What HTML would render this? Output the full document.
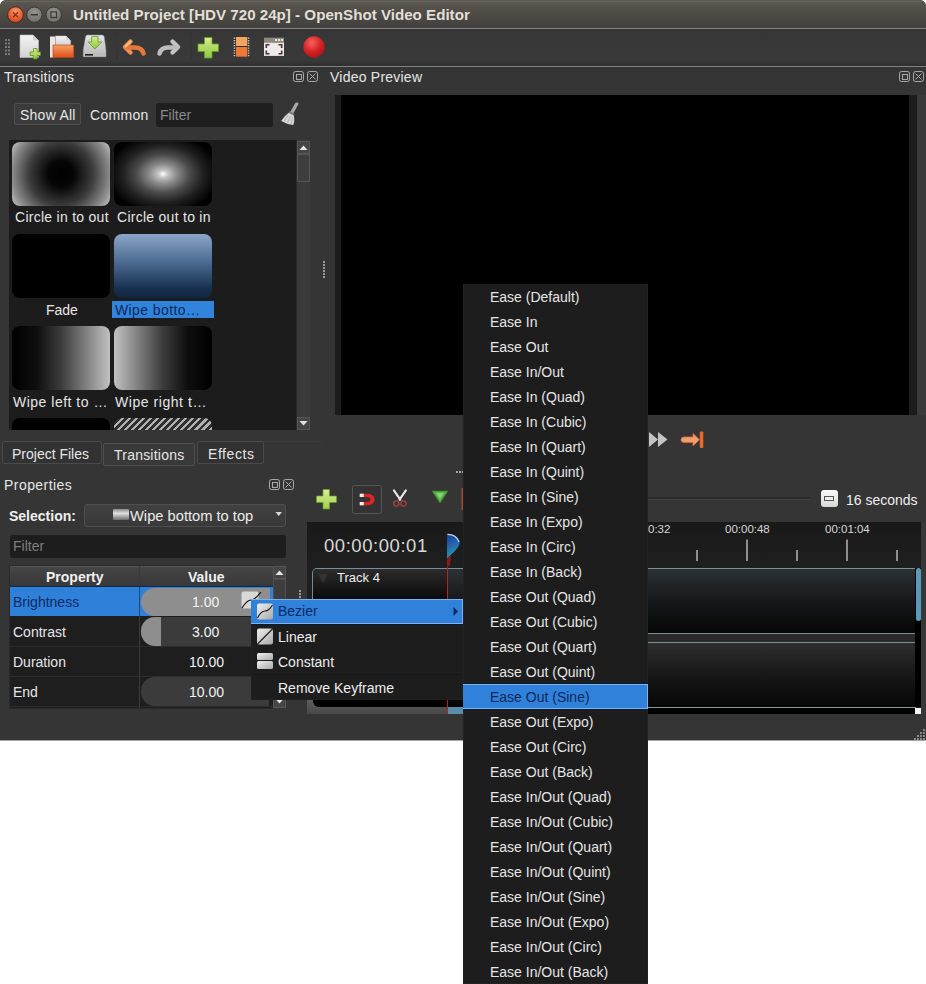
<!DOCTYPE html>
<html><head><meta charset="utf-8">
<style>
*{margin:0;padding:0;box-sizing:border-box}
html,body{width:926px;height:984px;overflow:hidden;background:#ffffff;font-family:"Liberation Sans",sans-serif;}
.a{position:absolute}
.t{position:absolute;white-space:nowrap;font-size:14px;line-height:14px;color:#e6e6e6}
#win{position:absolute;left:0;top:0;width:926px;height:740px;background:#353535;overflow:hidden;border-radius:6px 6px 0 0}
</style></head><body>
<div id="win">
  <!-- title bar -->
  <div class="a" style="left:0;top:0;width:926px;height:28px;background:linear-gradient(#5b5950,#4d4b45 50%,#42403d);border-radius:6px 6px 0 0"></div>
  <div class="a" style="left:4px;top:1px;width:918px;height:1px;background:#66645c"></div>
  <div class="a" style="left:0;top:28px;width:926px;height:1px;background:#858480"></div>
  <div class="t" style="left:73px;top:7px;font-size:15.15px;line-height:15px;font-weight:bold;color:#e2dfd8">Untitled Project [HDV 720 24p] - OpenShot Video Editor</div>
  <!-- window buttons -->
  <svg class="a" style="left:0;top:0" width="70" height="28">
    <defs>
      <radialGradient id="gclose" cx="50%" cy="30%" r="65%"><stop offset="0" stop-color="#f79a70"/><stop offset="0.6" stop-color="#e8643a"/><stop offset="1" stop-color="#d44e26"/></radialGradient>
      <radialGradient id="ggray" cx="50%" cy="30%" r="65%"><stop offset="0" stop-color="#94938e"/><stop offset="1" stop-color="#72716c"/></radialGradient>
    </defs>
    <circle cx="15.5" cy="14.7" r="7.9" fill="url(#gclose)" stroke="#4a2418" stroke-width="0.9"/>
    <path d="M13 12.2 L18 17.2 M18 12.2 L13 17.2" stroke="#8a2c12" stroke-width="1.3"/>
    <circle cx="34.4" cy="14.7" r="7.7" fill="url(#ggray)" stroke="#33322e" stroke-width="0.9"/>
    <rect x="30.8" y="14" width="7.2" height="1.5" fill="#3a3935"/>
    <circle cx="53.7" cy="14.7" r="7.7" fill="url(#ggray)" stroke="#33322e" stroke-width="0.9"/>
    <rect x="50.9" y="11.9" width="5.6" height="5.6" fill="none" stroke="#3a3935" stroke-width="1.2"/>
  </svg>
  <!-- toolbar -->
  <div class="a" style="left:0;top:29px;width:926px;height:37px;background:linear-gradient(#343336,#383838 25%,#393939 85%,#2e2e2e)"></div>
  <div class="a" style="left:0;top:66px;width:926px;height:1px;background:#828282"></div>
  <svg class="a" style="left:0;top:29px" width="340" height="37">
    <defs>
      <linearGradient id="gpage" x1="0" y1="0" x2="0" y2="1"><stop offset="0" stop-color="#f4f4f4"/><stop offset="1" stop-color="#d2d2d2"/></linearGradient>
      <linearGradient id="ggreen" x1="0" y1="0" x2="0" y2="1"><stop offset="0" stop-color="#d4ee8a"/><stop offset="1" stop-color="#8cc63e"/></linearGradient>
      <linearGradient id="gorange" x1="0" y1="0" x2="0" y2="1"><stop offset="0" stop-color="#f7a060"/><stop offset="1" stop-color="#e0501c"/></linearGradient>
      <linearGradient id="gdrive" x1="0" y1="0" x2="0" y2="1"><stop offset="0" stop-color="#e6e6e6"/><stop offset="1" stop-color="#b8b8b8"/></linearGradient>
      <radialGradient id="gred" cx="40%" cy="30%" r="75%"><stop offset="0" stop-color="#f86060"/><stop offset="0.55" stop-color="#d82424"/><stop offset="1" stop-color="#a8121a"/></radialGradient>
    </defs>
    <!-- handle dots -->
    <g fill="#7a7a7a">
      <rect x="5" y="10" width="2" height="2"/><rect x="8" y="10" width="2" height="2"/>
      <rect x="5" y="13.5" width="2" height="2"/><rect x="8" y="13.5" width="2" height="2"/>
      <rect x="5" y="17" width="2" height="2"/><rect x="8" y="17" width="2" height="2"/>
      <rect x="5" y="20.5" width="2" height="2"/><rect x="8" y="20.5" width="2" height="2"/>
      <rect x="5" y="24" width="2" height="2"/><rect x="8" y="24" width="2" height="2"/>
    </g>
    <!-- new -->
    <path d="M20 6 H33 L38.5 11.5 V28.5 H20 Z" fill="url(#gpage)" stroke="#bdbdbd" stroke-width="0.6"/>
    <path d="M33 6 V11.5 H38.5 Z" fill="#cfcfcf"/>
    <path d="M33.5 19.5 h3.6 v3.4 h3.4 v3.6 h-3.4 v3.4 h-3.6 v-3.4 h-3.4 v-3.6 h3.4 z" fill="url(#ggreen)" stroke="#5f8f1f" stroke-width="0.8"/>
    <!-- open -->
    <path d="M50 7.5 H55 V28.5 H50 Z" fill="#eee6de"/>
    <path d="M55.5 7 H66 L70.6 11.6 V17 H55.5 Z" fill="url(#gpage)" stroke="#c8c8c8" stroke-width="0.5"/>
    <path d="M66 7 V11.6 H70.6 Z" fill="#d4d4d4"/>
    <path d="M53 16 H73.8 V28.7 H53 Z" fill="url(#gorange)" stroke="#a83a10" stroke-width="0.6"/>
    <!-- save -->
    <path d="M85.5 8 Q85.5 6 87.5 6 H102 Q104 6 104.3 8 L106 21 V27.7 H83.2 V21 Z" fill="url(#gdrive)" stroke="#8a8a8a" stroke-width="0.5"/>
    <ellipse cx="95" cy="15" rx="8.5" ry="6" fill="none" stroke="#c4c4c4" stroke-width="0.8"/>
    <rect x="83.5" y="24" width="22.3" height="3.6" fill="#bdbdbd"/>
    <rect x="85" y="25" width="8" height="1.6" fill="#222"/>
    <path d="M91.7 7.5 H98 V13 H101.8 L94.9 20 L88.2 13 H91.7 Z" fill="url(#ggreen)" stroke="#5a8a20" stroke-width="0.7"/>
    <!-- separator -->
    <rect x="116.5" y="8" width="1" height="22" fill="#333"/>
    <!-- undo -->
    <g fill="none" stroke-linecap="round" stroke-linejoin="round">
      <path d="M130.5 12.5 L125 18 L130.5 23.5" stroke="#f09050" stroke-width="4.4"/>
      <path d="M126.5 18.5 H135 Q142 18.5 143.5 24.5" stroke="#e8783a" stroke-width="4.6"/>
      <path d="M130.5 12.5 L125.5 17.5" stroke="#f8c08a" stroke-width="1.8"/>
    </g>
    <!-- redo -->
    <g fill="none" stroke-linecap="round" stroke-linejoin="round">
      <path d="M172.5 12.5 L178 18 L172.5 23.5" stroke="#c4c4c4" stroke-width="4.4"/>
      <path d="M176.5 18.5 H168 Q161 18.5 159.5 24.5" stroke="#bcbcbc" stroke-width="4.6"/>
    </g>
    <rect x="190.5" y="8" width="1" height="22" fill="#333"/>
    <!-- add -->
    <path d="M204.5 8.5 h7.5 v6.5 h6.5 v7.5 h-6.5 v6.5 h-7.5 v-6.5 h-6.5 v-7.5 h6.5 z" fill="url(#ggreen)" stroke="#6b9b28" stroke-width="0.8"/>
    <!-- film -->
    <rect x="233" y="7.5" width="17" height="20.5" fill="#2e2e2e"/>
    <g fill="#d8c8b8">
      <rect x="233.6" y="8.5" width="1.6" height="1.3"/><rect x="233.6" y="11" width="1.6" height="1.3"/><rect x="233.6" y="13.5" width="1.6" height="1.3"/><rect x="233.6" y="16" width="1.6" height="1.3"/><rect x="233.6" y="18.5" width="1.6" height="1.3"/><rect x="233.6" y="21" width="1.6" height="1.3"/><rect x="233.6" y="23.5" width="1.6" height="1.3"/><rect x="233.6" y="26" width="1.6" height="1.3"/>
      <rect x="247.8" y="8.5" width="1.6" height="1.3"/><rect x="247.8" y="11" width="1.6" height="1.3"/><rect x="247.8" y="13.5" width="1.6" height="1.3"/><rect x="247.8" y="16" width="1.6" height="1.3"/><rect x="247.8" y="18.5" width="1.6" height="1.3"/><rect x="247.8" y="21" width="1.6" height="1.3"/><rect x="247.8" y="23.5" width="1.6" height="1.3"/><rect x="247.8" y="26" width="1.6" height="1.3"/>
    </g>
    <rect x="236" y="8" width="11.3" height="9" fill="#f2a55e"/>
    <rect x="236" y="18" width="11.3" height="9.7" fill="#ea7a34"/>
    <!-- fullscreen -->
    <rect x="264" y="8.7" width="20" height="5" fill="#8e8c80"/>
    <g fill="#e8e4d8"><rect x="275" y="10" width="2" height="2"/><rect x="278" y="10" width="2" height="2"/><rect x="281" y="10" width="2" height="2"/></g>
    <rect x="264" y="13.7" width="20" height="13.2" fill="#f2eaea"/>
    <g fill="#4a3434">
      <path d="M265.5 15 h4 v1.6 h-2.4 v2.4 h-1.6 z"/>
      <path d="M282.5 15 h-4 v1.6 h2.4 v2.4 h1.6 z"/>
      <path d="M265.5 25.6 h4 v-1.6 h-2.4 v-2.4 h-1.6 z"/>
      <path d="M282.5 25.6 h-4 v-1.6 h2.4 v-2.4 h1.6 z"/>
    </g>
    <!-- record -->
    <circle cx="314" cy="18" r="10.7" fill="url(#gred)"/>
  </svg>

  <!-- left dock header -->
  <div class="t" style="left:4px;top:70px;letter-spacing:0.2px">Transitions</div>
  <div class="t" style="left:330px;top:70px;letter-spacing:0.23px">Video Preview</div>

  <!-- transitions filter row -->
  <div class="a" style="left:14px;top:103px;width:67px;height:22px;border:1px solid #4e4e4e;background:#3b3b3b;border-radius:2px"></div>
  <div class="t" style="left:20px;top:108px;letter-spacing:0.25px">Show All</div>
  <div class="t" style="left:90px;top:108px;letter-spacing:0.3px">Common</div>
  <div class="a" style="left:156px;top:103px;width:117px;height:24px;background:#1f1f1f;border-radius:2px"></div>
  <div class="t" style="left:160px;top:108px;color:#8a8a8a">Filter</div>

  <!-- dock icons -->
  <svg class="a" style="left:0;top:66px" width="926" height="20">
    <g fill="none" stroke="#b4b4b4" stroke-width="0.9">
      <rect x="293.5" y="5.5" width="10" height="10" rx="2"/>
      <rect x="296.5" y="8.5" width="5" height="5"/>
      <rect x="307.5" y="5.5" width="10" height="10" rx="2"/>
      <path d="M309.5 7.5 L315.5 13.5 M315.5 7.5 L309.5 13.5"/>
      <rect x="899.5" y="5.5" width="10" height="10" rx="2"/>
      <rect x="902.5" y="8.5" width="5" height="5"/>
      <rect x="913.5" y="5.5" width="10" height="10" rx="2"/>
      <path d="M915.5 7.5 L921.5 13.5 M921.5 7.5 L915.5 13.5"/>
    </g>
  </svg>
  <!-- broom -->
  <svg class="a" style="left:278px;top:100px" width="24" height="28">
    <path d="M17.5 2.8 Q19.8 1.8 20.6 3.8 L15.3 13.6 L12.2 12 Z" fill="#a8a8a8"/>
    <path d="M11.5 11.2 L16.3 13.8 L15.8 15.5 L10.8 12.8 Z" fill="#7a7a7a"/>
    <path d="M10.8 12.8 L15.8 15.5 Q17 21 15.2 25 Q9 24.5 3.2 21 Q6 16 10.8 12.8 Z" fill="#d6d6d6"/>
    <path d="M10 15 L6 21.5 M12.3 16 L9.5 23 M14.5 17 L13 24" stroke="#a0a0a0" stroke-width="0.7"/>
  </svg>
  <!-- list -->
  <div class="a" style="left:9px;top:140px;width:287px;height:290px;background:#1c1c1c;overflow:hidden">
    <div class="a" style="left:3px;top:2px;width:98px;height:64px;border-radius:8px;background:radial-gradient(circle at 50% 50%,#000 0px,#060606 13px,#3c3c3c 32px,#8c8c8c 49px,#cbcbcb 59px)"></div>
    <div class="a" style="left:105px;top:2px;width:98px;height:64px;border-radius:8px;background:radial-gradient(ellipse 56px 40px at 50% 50%,#ffffff 0%,#c4c4c4 9%,#8a8a8a 25%,#4a4a4a 48%,#202020 72%,#0a0a0a 92%,#000 100%)"></div>
    <div class="a" style="left:3px;top:94px;width:98px;height:64px;border-radius:8px;background:#000"></div>
    <div class="a" style="left:105px;top:94px;width:98px;height:64px;border-radius:8px;background:linear-gradient(#8aa6c8,#4a6a90 45%,#17304f 85%,#112640)"></div>
    <div class="a" style="left:3px;top:186px;width:98px;height:64px;border-radius:8px;background:linear-gradient(90deg,#000 0%,#0e0e0e 25%,#3c3c3c 50%,#7e7e7e 75%,#c2c2c2 100%)"></div>
    <div class="a" style="left:105px;top:186px;width:98px;height:64px;border-radius:8px;background:linear-gradient(90deg,#c2c2c2 0%,#7e7e7e 25%,#3c3c3c 50%,#0e0e0e 75%,#000 100%)"></div>
    <div class="a" style="left:3px;top:278px;width:98px;height:64px;border-radius:8px;background:#000"></div>
    <div class="a" style="left:105px;top:278px;width:98px;height:64px;border-radius:8px;background:repeating-linear-gradient(135deg,#b0b0b0 0px,#b0b0b0 2.2px,#2e2e2e 2.2px,#2e2e2e 5px)"></div>
    <div class="t" style="left:6px;top:70px;letter-spacing:0.27px">Circle in to out</div>
    <div class="t" style="left:108px;top:70px;letter-spacing:0.27px">Circle out to in</div>
    <div class="t" style="left:37px;top:163px">Fade</div>
    <div class="a" style="left:103px;top:161px;width:102px;height:17px;background:#3084db"></div>
    <div class="t" style="left:106px;top:163px;color:#10285a;letter-spacing:0.4px">Wipe botto…</div>
    <div class="t" style="left:4px;top:255px;letter-spacing:0.5px">Wipe left to …</div>
    <div class="t" style="left:106px;top:255px;letter-spacing:0.55px">Wipe right t…</div>
  </div>
  <!-- list scrollbar -->
  <div class="a" style="left:296px;top:140px;width:14px;height:290px;background:#3a3a3a;border-left:1px solid #2a2a2a"></div>
  <div class="a" style="left:297px;top:141px;width:13px;height:13px;background:#454545;border:1px solid #555"></div>
  <svg class="a" style="left:297px;top:141px" width="13" height="13"><path d="M2.5 9 L6.5 4.5 L10.5 9 Z" fill="#e6e6e6"/></svg>
  <div class="a" style="left:297px;top:154px;width:13px;height:28px;background:#3e3e3e;border:1px solid #555"></div>
  <div class="a" style="left:297px;top:417px;width:13px;height:13px;background:#454545;border:1px solid #555"></div>
  <svg class="a" style="left:297px;top:417px" width="13" height="13"><path d="M2.5 4 L6.5 8.5 L10.5 4 Z" fill="#e6e6e6"/></svg>
  <!-- splitter dots -->
  <g></g>
  <svg class="a" style="left:322px;top:260px" width="4" height="20"><g fill="#9a9a9a"><rect x="1" y="1" width="2" height="2"/><rect x="1" y="4" width="2" height="2"/><rect x="1" y="7" width="2" height="2"/><rect x="1" y="10" width="2" height="2"/><rect x="1" y="13" width="2" height="2"/><rect x="1" y="16" width="2" height="2"/></g></svg>

  <!-- tabs -->
  <div class="a" style="left:264px;top:441px;width:58px;height:1px;background:#3c3c3c"></div>
  <div class="a" style="left:2px;top:441px;width:100px;height:23px;background:#323232;border:1px solid #4a4a4a;border-radius:2px"></div>
  <div class="a" style="left:103px;top:443px;width:92px;height:23px;background:#393939;border:1px solid #505050;border-radius:2px"></div>
  <div class="a" style="left:197px;top:441px;width:67px;height:23px;background:#323232;border:1px solid #4a4a4a;border-radius:2px"></div>
  <div class="t" style="left:12px;top:447px">Project Files</div>
  <div class="t" style="left:114px;top:448px;letter-spacing:0.22px">Transitions</div>
  <div class="t" style="left:208px;top:447px;letter-spacing:0.57px">Effects</div>

  <!-- properties -->
  <div class="t" style="left:4px;top:478px;letter-spacing:0.45px">Properties</div>
  <svg class="a" style="left:260px;top:474px" width="40" height="20">
    <g fill="none" stroke="#b4b4b4" stroke-width="0.9">
      <rect x="9.5" y="5.5" width="10" height="10" rx="2"/>
      <rect x="12.5" y="8.5" width="5" height="5"/>
      <rect x="23.5" y="5.5" width="10" height="10" rx="2"/>
      <path d="M25.5 7.5 L31.5 13.5 M31.5 7.5 L25.5 13.5"/>
    </g>
  </svg>
  <div class="t" style="left:9px;top:509px;font-weight:bold;color:#f0f0f0">Selection:</div>
  <div class="a" style="left:84px;top:504px;width:202px;height:23px;background:linear-gradient(#414141,#393939);border:1px solid #4f4f4f;border-radius:3px"></div>
  <div class="a" style="left:113px;top:509px;width:16px;height:11px;background:linear-gradient(#8a8a8a,#e0e0e0 40%,#6a6a6a);border-radius:1px"></div>
  <svg class="a" style="left:275px;top:511px" width="8" height="6"><path d="M0.5 1 L7 1 L3.75 5 Z" fill="#d8d8d8"/></svg>
  <div class="t" style="left:130px;top:509px;font-size:14.7px;color:#ececec">Wipe bottom to top</div>
  <div class="a" style="left:10px;top:535px;width:276px;height:23px;background:#1d1d1d;border-radius:3px"></div>
  <div class="t" style="left:13px;top:539px;color:#7e7e7e">Filter</div>

  <!-- table -->
  <div class="a" style="left:9px;top:565px;width:265px;height:144px;background:#1e1e1e;border:1px solid #2a2a2a"></div>
  <div class="a" style="left:10px;top:566px;width:263px;height:20px;background:linear-gradient(#454545,#383838);border-top:1px solid #555"></div>
  <div class="a" style="left:139px;top:566px;width:1px;height:142px;background:#3a3a3a"></div>
  <div class="t" style="left:46px;top:570px;font-weight:bold;color:#f0f0f0">Property</div>
  <div class="t" style="left:188px;top:570px;font-weight:bold;color:#f0f0f0">Value</div>
  <div class="a" style="left:10px;top:586px;width:263px;height:1px;background:#0e2a4a"></div>
  <div class="a" style="left:10px;top:587px;width:263px;height:29px;background:#2f80d9"></div>
  <div class="a" style="left:139px;top:587px;width:1px;height:29px;background:#1c4a80"></div>
  <div class="a" style="left:10px;top:646px;width:263px;height:1px;background:#2c2c2c"></div>
  <div class="a" style="left:10px;top:676px;width:263px;height:1px;background:#2c2c2c"></div>
  <div class="a" style="left:10px;top:706px;width:263px;height:1px;background:#2c2c2c"></div>
  <!-- sliders -->
  <div class="a" style="left:141px;top:588px;width:129px;height:28px;background:#8e8e8e;border-radius:14px 0 0 14px"></div>
  <div class="a" style="left:141px;top:617px;width:118px;height:29px;background:#3b3b3b;border-radius:14px 0 0 14px;overflow:hidden"><div class="a" style="left:0;top:0;width:20px;height:29px;background:#8e8e8e"></div></div>
  <div class="a" style="left:141px;top:677px;width:128px;height:29px;background:#3b3b3b;border-radius:14px 0 0 14px"></div>
  <div class="t" style="left:13px;top:595px;color:#0c2a66">Brightness</div>
  <div class="t" style="left:13px;top:625px">Contrast</div>
  <div class="t" style="left:13px;top:655px">Duration</div>
  <div class="t" style="left:13px;top:685px">End</div>
  <div class="t" style="left:192px;top:595px;color:#f4f4f4">1.00</div>
  <div class="t" style="left:192px;top:625px;color:#f4f4f4">3.00</div>
  <div class="t" style="left:189px;top:655px;color:#f4f4f4">10.00</div>
  <div class="t" style="left:189px;top:685px;color:#f4f4f4">10.00</div>
  <!-- curve icon in cell -->
  <svg class="a" style="left:241px;top:591px" width="21" height="19">
    <rect x="0.5" y="0.5" width="17" height="17" rx="2" fill="#d8d8d8"/>
    <path d="M1 17 Q6 9 10 9 Q14 9 20 1" stroke="#111" stroke-width="1.2" fill="none"/>
  </svg>
  <!-- table scrollbar -->
  <div class="a" style="left:273px;top:566px;width:13px;height:142px;background:#383838;border-left:1px solid #2a2a2a"></div>
  <div class="a" style="left:273px;top:566px;width:13px;height:13px;background:#454545;border:1px solid #555"></div>
  <svg class="a" style="left:273px;top:566px" width="13" height="13"><path d="M2.5 9 L6.5 4.5 L10.5 9 Z" fill="#e6e6e6"/></svg>
  <div class="a" style="left:273px;top:579px;width:13px;height:50px;background:#3d3d3d;border:1px solid #505050"></div>
  <div class="a" style="left:273px;top:695px;width:13px;height:13px;background:#454545;border:1px solid #555"></div>
  <svg class="a" style="left:273px;top:695px" width="13" height="13"><path d="M2.5 4 L6.5 8.5 L10.5 4 Z" fill="#e6e6e6"/></svg>

  <!-- video -->
  <div class="a" style="left:335px;top:95px;width:582px;height:320px;background:#1c1c1c"></div>
  <div class="a" style="left:341px;top:95px;width:568px;height:320px;background:#000"></div>
  <div class="a" style="left:917px;top:95px;width:9px;height:320px;background:#3a3a3a"></div>
  <!-- player controls -->
  <svg class="a" style="left:640px;top:425px" width="80" height="30">
    <path d="M9 7 L18 14.5 L9 22 Z M18 7 L27.5 14.5 L18 22 Z" fill="#c4c4c4"/>
    <path d="M44 12 H53 V8.5 L59.5 14.7 L53 21 V17.5 H44 Q41 17.5 41 14.75 Q41 12 44 12 Z" fill="#f0a070" stroke="#e06a2a" stroke-width="0.8"/>
    <rect x="59.8" y="6.5" width="3.5" height="16.5" rx="1" fill="#e86a2a"/>
  </svg>
  <svg class="a" style="left:455px;top:468px" width="10" height="6"><g fill="#aaa"><rect x="1" y="3" width="2" height="2"/><rect x="4" y="3" width="2" height="2"/><rect x="7" y="3" width="2" height="2"/></g></svg>
  <!-- timeline toolbar -->
  <svg class="a" style="left:307px;top:482px" width="160" height="36">
    <defs>
      <linearGradient id="ggreen2" x1="0" y1="0" x2="0" y2="1"><stop offset="0" stop-color="#d8f098"/><stop offset="1" stop-color="#a0cc48"/></linearGradient>
    </defs>
    <path d="M16 7.5 h6.5 v6.5 h7 v6.5 h-7 v6.5 h-6.5 v-6.5 h-6.5 v-6.5 h6.5 z" fill="url(#ggreen2)" stroke="#6a9a28" stroke-width="0.7"/>
    <rect x="45.5" y="3.5" width="29" height="28" rx="2" fill="#333" stroke="#555" stroke-width="1"/>
    <path d="M59 11.7 H54 V15 H59 Q63.5 15 63.5 17.5 Q63.5 20 59 20 H54 V23.3 H59 Q67.6 23.3 67.6 17.5 Q67.6 11.7 59 11.7 Z" fill="#e02424"/>
    <rect x="52.7" y="11.7" width="4" height="3.3" fill="#f4f0f0"/><rect x="52.7" y="20" width="4" height="3.3" fill="#f4f0f0"/>
    <path d="M87 8.5 L93.2 17.5 M98.8 8.5 L92.6 17.5" stroke="#ececec" stroke-width="2.2" stroke-linecap="round"/>
    <circle cx="89.3" cy="21.5" r="2.6" fill="none" stroke="#a84040" stroke-width="1.4"/>
    <circle cx="96.5" cy="21.5" r="2.6" fill="none" stroke="#a84040" stroke-width="1.4"/>
    <path d="M125 9 H141 L133 21 Z" fill="#58b048" stroke="#2e7a28" stroke-width="0.8"/>
    <path d="M129 11 H137 L133 17 Z" fill="#8ad070"/>
    <rect x="154.5" y="6" width="1.5" height="22" fill="#a04a30"/>
  </svg>
  <!-- zoom slider -->
  <div class="a" style="left:648px;top:497px;width:163px;height:3px;background:#2a2a2a;border-bottom:1px solid #444"></div>
  <div class="a" style="left:821px;top:490px;width:17px;height:17px;background:linear-gradient(#fafafa,#d8d8d8);border-radius:3px"></div>
  <div class="a" style="left:824px;top:496px;width:10px;height:5px;border:1px solid #555;background:#eee"></div>
  <div class="t" style="left:846px;top:493px;color:#eeeeee">16 seconds</div>

  <!-- timeline -->
  <div class="a" style="left:307px;top:522px;width:614px;height:192px;background:linear-gradient(#191919,#1f1f1f 46px,#1c1c1c)"></div>
  <div class="a" style="left:921px;top:522px;width:5px;height:192px;background:#383838"></div>
  <div class="t" style="left:324px;top:537px;font-size:18.5px;line-height:18px;letter-spacing:0.55px;color:#d8d8d8">00:00:00:01</div>
  <!-- ruler -->
  <svg class="a" style="left:440px;top:522px" width="482" height="47">
    <g fill="#8e8e8e">
      <rect x="256" y="28" width="2" height="11"/><rect x="306" y="17.5" width="2" height="21.5"/>
      <rect x="356" y="28" width="2" height="11"/><rect x="406" y="17.5" width="2" height="21.5"/>
      <rect x="456" y="28" width="2" height="11"/>
    </g>
  </svg>
  <div class="t" style="left:648px;top:523px;font-size:11.5px;line-height:12px;color:#d8d8d8">0:32</div>
  <div class="t" style="left:725px;top:523px;font-size:11.5px;line-height:12px;color:#d8d8d8">00:00:48</div>
  <div class="t" style="left:825px;top:523px;font-size:11.5px;line-height:12px;color:#d8d8d8">00:01:04</div>
  <!-- tracks -->
  <div class="a" style="left:312px;top:568px;width:604px;height:65px;border-top:1px solid #7a9098;border-left:1px solid #7a8a94;border-radius:5px 0 0 0;background:linear-gradient(#2c3134,#171819 50%,#060606)"></div>
  <div class="a" style="left:313px;top:569px;width:134px;height:64px;border-radius:4px 0 0 0;background:linear-gradient(#2c2c2c,#161616 30%,#030303 60%,#000)"></div>
  <div class="a" style="left:312px;top:633px;width:604px;height:9px;background:#2a2a2a;border-top:1px solid #7c8c96"></div>
  <div class="a" style="left:312px;top:642px;width:604px;height:66px;border-top:1px solid #7c8c96;border-left:1px solid #7a8a94;background:linear-gradient(#2e2e2e,#151515 55%,#060606)"></div>
  <div class="a" style="left:312px;top:707px;width:604px;height:1px;background:#8a9aa4"></div>
  <div class="a" style="left:307px;top:708px;width:614px;height:6px;background:#000"></div>
  <div class="a" style="left:307px;top:700px;width:141px;height:14px;background:linear-gradient(#5e5e5e,#484848)"></div>
  <div class="a" style="left:313px;top:699px;width:135px;height:8px;background:#000;border-radius:0 0 0 6px"></div>
  <div class="a" style="left:448px;top:707px;width:15px;height:7px;background:#5a8ea8"></div>
  <div class="a" style="left:915px;top:708px;width:6px;height:6px;background:#f4f4f4"></div>
  <!-- vertical scrollbar -->
  <div class="a" style="left:915px;top:568px;width:6px;height:139px;background:#000"></div>
  <div class="a" style="left:915.5px;top:568px;width:5px;height:53px;background:#5a9ab8;border-radius:3px"></div>
  <svg class="a" style="left:316px;top:572px" width="14" height="12"><path d="M2 2 L12 2 L7 11 Z" fill="#333"/></svg>
  <div class="t" style="left:337px;top:571px;font-size:13px;line-height:13px;color:#f0f0f0">Track 4</div>
  <!-- playhead -->
  <svg class="a" style="left:440px;top:530px" width="24" height="190">
    <defs><linearGradient id="gph" x1="0" y1="0" x2="0.3" y2="1"><stop offset="0" stop-color="#1a3a98"/><stop offset="0.55" stop-color="#2468b0"/><stop offset="1" stop-color="#2a9aa4"/></linearGradient></defs>
    <path d="M7 3.8 C13.5 3.8 19.7 7.5 19.7 12.5 C19.5 17.5 12.5 23.5 7 28.4 Z" fill="url(#gph)"/>
    <path d="M7.5 4.4 C13 4.4 17.3 7.3 19 12" stroke="#c4d4ea" stroke-width="1.2" fill="none"/>
    <path d="M7 28.4 L11 25.8 L10 35 L7 37 Z" fill="#8e1a1e"/>
    <rect x="7" y="37" width="1" height="147" fill="#b02626"/>
  </svg>
  <!-- bottom status -->
<svg class="a" style="left:910px;top:726px" width="16" height="14"><g fill="#8a8a8a"><rect x="13" y="3" width="2" height="2"/><rect x="10" y="6" width="2" height="2"/><rect x="13" y="6" width="2" height="2"/><rect x="7" y="9" width="2" height="2"/><rect x="10" y="9" width="2" height="2"/><rect x="13" y="9" width="2" height="2"/><rect x="4" y="12" width="2" height="2"/><rect x="7" y="12" width="2" height="2"/><rect x="10" y="12" width="2" height="2"/><rect x="13" y="12" width="2" height="2"/></g></svg>

  <svg class="a" style="left:298px;top:588px" width="4" height="12"><g fill="#9a9a9a"><rect x="1" y="2" width="2" height="2"/><rect x="1" y="5" width="2" height="2"/><rect x="1" y="8" width="2" height="2"/></g></svg>
  <!-- context menu -->
  <div class="a" style="left:251px;top:599px;width:212px;height:101px;background:#1d1d1d;border:1px solid #202020"></div>
  <div class="a" style="left:251px;top:599px;width:212px;height:26px;background:#0a1a36"></div>
  <div class="a" style="left:251px;top:599px;width:212px;height:25px;background:#2f81da;border:1px solid #7fb2ea;border-left:none"></div>
  <div class="a" style="left:252px;top:674px;width:210px;height:1px;background:#161616"></div>
  <svg class="a" style="left:251px;top:599px" width="212" height="100">
    <defs><linearGradient id="gic" x1="0" y1="0" x2="1" y2="1"><stop offset="0" stop-color="#f0f0f0"/><stop offset="1" stop-color="#a8a8a8"/></linearGradient></defs>
    <rect x="6" y="4.5" width="16" height="16" rx="2" fill="url(#gic)"/>
    <path d="M6.5 19 Q10 12 14 12 Q18 12 21.5 6" stroke="#1a1a1a" stroke-width="1.1" fill="none"/>
    <rect x="6" y="29.5" width="16" height="16" rx="2" fill="url(#gic)"/>
    <path d="M6.5 45 L21.5 30" stroke="#1a1a1a" stroke-width="1.1"/>
    <rect x="6" y="54" width="16" height="7" rx="1.5" fill="url(#gic)"/>
    <rect x="6" y="62" width="16" height="8" rx="1.5" fill="url(#gic)"/>
    <path d="M202.5 8 L207 12.5 L202.5 17 Z" fill="#10285a"/>
  </svg>
  <div class="t" style="left:278px;top:604px;color:#0c2a66">Bezier</div>
  <div class="t" style="left:278px;top:630px;color:#eeeeee">Linear</div>
  <div class="t" style="left:278px;top:655px;color:#eeeeee">Constant</div>
  <div class="t" style="left:278px;top:681px;color:#eeeeee">Remove Keyframe</div>
</div>
<div class="a" style="left:0;top:740px;width:926px;height:1px;background:#353535;opacity:0.45"></div>

<!-- submenu -->
<div class="a" style="left:463px;top:284px;width:185px;height:700px;background:#1d1d1d;border:1px solid #222">
  <div class="a" style="left:-1px;top:398px;width:185px;height:27px;background:#0a1a36"></div>
  <div class="a" style="left:-1px;top:399px;width:185px;height:25px;background:#2f81da;border:1px solid #7fb2ea;border-left:none"></div>
  <div class="t" style="left:26px;top:5px">Ease (Default)</div>
  <div class="t" style="left:26px;top:30px">Ease In</div>
  <div class="t" style="left:26px;top:55px">Ease Out</div>
  <div class="t" style="left:26px;top:80px">Ease In/Out</div>
  <div class="t" style="left:26px;top:105px">Ease In (Quad)</div>
  <div class="t" style="left:26px;top:130px">Ease In (Cubic)</div>
  <div class="t" style="left:26px;top:155px">Ease In (Quart)</div>
  <div class="t" style="left:26px;top:180px">Ease In (Quint)</div>
  <div class="t" style="left:26px;top:205px">Ease In (Sine)</div>
  <div class="t" style="left:26px;top:230px">Ease In (Expo)</div>
  <div class="t" style="left:26px;top:255px">Ease In (Circ)</div>
  <div class="t" style="left:26px;top:280px">Ease In (Back)</div>
  <div class="t" style="left:26px;top:305px">Ease Out (Quad)</div>
  <div class="t" style="left:26px;top:330px">Ease Out (Cubic)</div>
  <div class="t" style="left:26px;top:355px">Ease Out (Quart)</div>
  <div class="t" style="left:26px;top:380px">Ease Out (Quint)</div>
  <div class="t" style="left:26px;top:405px;color:#10285a">Ease Out (Sine)</div>
  <div class="t" style="left:26px;top:430px">Ease Out (Expo)</div>
  <div class="t" style="left:26px;top:455px">Ease Out (Circ)</div>
  <div class="t" style="left:26px;top:480px">Ease Out (Back)</div>
  <div class="t" style="left:26px;top:505px">Ease In/Out (Quad)</div>
  <div class="t" style="left:26px;top:530px">Ease In/Out (Cubic)</div>
  <div class="t" style="left:26px;top:555px">Ease In/Out (Quart)</div>
  <div class="t" style="left:26px;top:580px">Ease In/Out (Quint)</div>
  <div class="t" style="left:26px;top:605px">Ease In/Out (Sine)</div>
  <div class="t" style="left:26px;top:630px">Ease In/Out (Expo)</div>
  <div class="t" style="left:26px;top:655px">Ease In/Out (Circ)</div>
  <div class="t" style="left:26px;top:680px">Ease In/Out (Back)</div>
</div>
</body></html>
